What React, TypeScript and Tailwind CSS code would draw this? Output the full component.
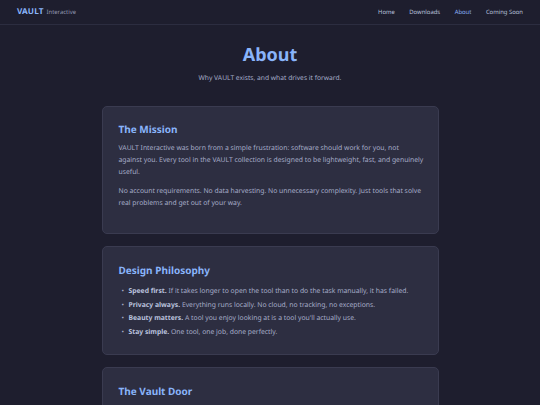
import React from "react";

export default function App() {
  return (
    <div className="min-h-screen bg-[#1e1e2e] text-[#a6adc8] [text-rendering:geometricPrecision]" style={{ fontFamily: '"Noto Sans", sans-serif' }}>
      <header className="h-[25px] flex items-center justify-between px-[17px] border-b border-[#2c2d40]">
        <div className="flex items-baseline gap-[3px]">
          <span className="text-[8.2px] font-bold text-[#89b4fa] tracking-[0.1px]">VAULT</span>
          <span className="text-[5.9px] text-[#9399b2]">Interactive</span>
        </div>
        <nav className="flex items-center gap-[14.5px] text-[5.9px] text-[#bac2de]">
          <span>Home</span>
          <span>Downloads</span>
          <span className="text-[#89b4fa]">About</span>
          <span>Coming Soon</span>
        </nav>
      </header>
      <main className="flex flex-col items-center pt-[18px]">
        <h1 className="text-[18px] font-bold text-[#89b4fa] leading-[24px]">About</h1>
        <p className="text-[6.7px] text-[#a6adc8] mt-[6px]">Why VAULT exists, and what drives it forward.</p>
        <div className="w-[337px] mt-[23px] flex flex-col gap-[12px] text-[6.8px]">
          <section className="bg-[#2d2e41] border border-[#3a3b50] rounded-[5px] px-[16px] pt-[15px] pb-[17px]">
            <h2 className="text-[10px] font-bold text-[#89b4fa] leading-[15px]">The Mission</h2>
            <p className="leading-[12px] mt-[5px] mb-[7px] -mr-[15px]">
              VAULT Interactive was born from a simple frustration: software should work for you, not
              <br />
              against you. Every tool in the VAULT collection is designed to be lightweight, fast, and genuinely useful.
            </p>
            <p className="leading-[12px] mb-[7px]">
              No account requirements. No data harvesting. No unnecessary complexity. Just tools that solve real problems and get out of your way.
            </p>
          </section>
          <section className="bg-[#2d2e41] border border-[#3a3b50] rounded-[5px] px-[16px] pt-[16px] pb-[16px]">
            <h2 className="text-[10px] font-bold text-[#89b4fa] leading-[15px]">Design Philosophy</h2>
            <ul className="mt-[7px] flex flex-col gap-[1.5px] leading-[12px]">
              {[
                ["Speed first.", "If it takes longer to open the tool than to do the task manually, it has failed."],
                ["Privacy always.", "Everything runs locally. No cloud, no tracking, no exceptions."],
                ["Beauty matters.", "A tool you enjoy looking at is a tool you'll actually use."],
                ["Stay simple.", "One tool, one job, done perfectly."],
              ].map(([b, t]) => (
                <li key={b} className="flex items-start">
                  <span className="w-[10px] shrink-0 pl-[3px]">•</span>
                  <span>
                    <strong className="font-bold text-[#bac2de]">{b}</strong> {t}
                  </span>
                </li>
              ))}
            </ul>
          </section>
          <section className="bg-[#2d2e41] border border-[#3a3b50] rounded-[5px] px-[16px] pt-[16px] pb-[17px]">
            <h2 className="text-[10px] font-bold text-[#89b4fa] leading-[15px]">The Vault Door</h2>
            <p className="leading-[12px] mt-[5px]">
              Every VAULT tool shares the same visual language, so once you know one, you know them all.
            </p>
          </section>
        </div>
      </main>
    </div>
  );
}
